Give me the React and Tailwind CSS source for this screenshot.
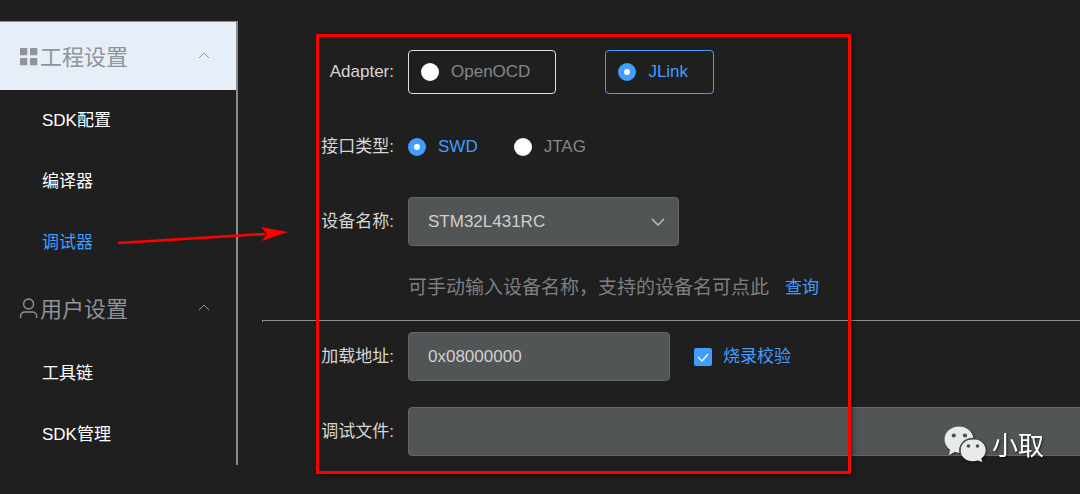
import { useState } from 'react';

const menus = [
    { title: '工程设置', icon: 'grid', active: true, items: ['SDK配置', '编译器', '调试器'] },
    { title: '用户设置', icon: 'user', active: false, items: ['工具链', 'SDK管理'] },
];

const MenuIcon = ({ name }) => {
    if (name === 'grid') {
        return (
            <svg viewBox="0 0 20 20" className="w-5 h-5 shrink-0" fill="currentColor" aria-hidden="true">
                <rect x="1" y="2" width="7.3" height="7.3" rx="0.6" />
                <rect x="11" y="2" width="7.3" height="7.3" rx="0.6" />
                <rect x="1" y="12" width="7.3" height="7.3" rx="0.6" />
                <rect x="11" y="12" width="7.3" height="7.3" rx="0.6" />
            </svg>
        );
    }
    return (
        <svg viewBox="0 0 20 20" className="w-5 h-5 shrink-0" fill="none" stroke="currentColor" strokeWidth="1.4" aria-hidden="true">
            <circle cx="9.6" cy="6" r="5" />
            <path d="M1.6 20v-2a4 4 0 0 1 4-4h8a4 4 0 0 1 4 4v2" />
        </svg>
    );
};

const Sidebar = ({ current, onSelect }) => (
    <nav className="w-[238px] shrink-0 border-t border-r-2 border-t-[#8a8a8a] border-r-[#8a8a8a]">
        {menus.map((menu) => (
            <section key={menu.title}>
                <button
                    type="button"
                    className={`flex w-full items-center pl-[19px] pr-[25px] text-[22px] text-[#909399] ${menu.active ? 'h-[68px] bg-[#e6eef8]' : 'h-[70px]'}`}
                >
                    <MenuIcon name={menu.icon} />
                    <span className="ml-px pt-0.5">{menu.title}</span>
                    <svg viewBox="0 0 14 14" className="ml-auto w-3.5 h-3.5" fill="none" stroke="currentColor" strokeWidth="1" aria-hidden="true">
                        <path d="M2 9l5-5 5 5" />
                    </svg>
                </button>
                <ul>
                    {menu.items.map((item) => (
                        <li key={item}>
                            <button
                                type="button"
                                onClick={() => onSelect(item)}
                                className={`flex h-[61px] w-full items-center pl-[42px] text-[17px] ${current === item ? 'text-[#409eff]' : 'text-white'}`}
                            >
                                {item}
                            </button>
                        </li>
                    ))}
                </ul>
            </section>
        ))}
    </nav>
);

const Radio = ({ name, value, current, onChange, bordered }) => {
    const checked = value === current;
    const frame = bordered ? 'h-11 rounded border px-3 pr-[25px]' : 'h-11';
    const tone = checked ? 'border-[#409eff] text-[#409eff]' : 'border-[#dcdfe6] text-[#85878c]';
    return (
        <label className={`flex items-center gap-3 text-[17px] ${frame} ${tone}`}>
            <input
                type="radio"
                name={name}
                value={value}
                checked={checked}
                onChange={() => onChange(value)}
                className="w-[18px] h-[18px] shrink-0 appearance-none rounded-full bg-white checked:border-[6px] checked:border-[#409eff]"
            />
            {value}
        </label>
    );
};

const Row = ({ label, htmlFor, children }) => (
    <div className="flex items-center gap-3.5">
        <label htmlFor={htmlFor} className="w-[132px] shrink-0 text-right text-[17px] text-[#d8d6d4]">
            {label}
        </label>
        {children}
    </div>
);

const fieldStyle = 'h-[49px] rounded border border-[#646767] bg-[#515556] px-[19px] text-[17px] text-[#d3cfcd]';

const App = () => {
    const [current, setCurrent] = useState('调试器');
    const [adapter, setAdapter] = useState('JLink');
    const [port, setPort] = useState('SWD');
    const [address, setAddress] = useState('0x08000000');
    const [file, setFile] = useState('');
    const [verify, setVerify] = useState(true);

    return (
        <div className="relative flex min-h-screen items-start overflow-hidden bg-[#1f1f1f] pt-[21px] pb-7 font-['Liberation_Sans','Noto_Sans_CJK_SC',sans-serif]">
            <Sidebar current={current} onSelect={setCurrent} />

            <form className="min-w-0 flex-1 pt-[29px] pl-6" onSubmit={(e) => e.preventDefault()}>
                <Row label="Adapter:">
                    <div className="flex gap-[49px]">
                        <Radio name="adapter" value="OpenOCD" current={adapter} onChange={setAdapter} bordered />
                        <Radio name="adapter" value="JLink" current={adapter} onChange={setAdapter} bordered />
                    </div>
                </Row>

                <div className="mt-[31px]">
                    <Row label="接口类型:">
                        <div className="flex gap-9">
                            <Radio name="port" value="SWD" current={port} onChange={setPort} />
                            <Radio name="port" value="JTAG" current={port} onChange={setPort} />
                        </div>
                    </Row>
                </div>

                <div className="mt-7">
                    <Row label="设备名称:" htmlFor="device">
                        <div className="relative w-[271px]">
                            <select id="device" className={`w-full appearance-none ${fieldStyle}`}>
                                <option>STM32L431RC</option>
                            </select>
                            <svg viewBox="0 0 14 14" className="pointer-events-none absolute top-[18px] right-3.5 w-3.5 h-3.5 text-[#c0c4cc]" fill="none" stroke="currentColor" strokeWidth="1.4" aria-hidden="true">
                                <path d="M1 4l6 6 6-6" />
                            </svg>
                        </div>
                    </Row>
                </div>

                <p className="mt-7 ml-[146px] flex items-center gap-4 text-[19px] leading-7 text-[#7d7f84]">
                    可手动输入设备名称，支持的设备名可点此
                    <a href="#query" className="text-[17px] text-[#409eff]">查询</a>
                </p>

                <hr className="mt-[18px] mb-2.5 h-0.5 border-t border-l border-[#8f8f8f]" />

                <Row label="加载地址:" htmlFor="address">
                    <input
                        id="address"
                        type="text"
                        value={address}
                        onChange={(e) => setAddress(e.target.value)}
                        className={`w-[262px] ${fieldStyle}`}
                    />
                    <label className="ml-2.5 flex items-center gap-[11px] text-[17px] text-[#409eff]">
                        <span className="relative flex">
                            <input
                                type="checkbox"
                                checked={verify}
                                onChange={(e) => setVerify(e.target.checked)}
                                className="w-[18px] h-[18px] appearance-none rounded-xs bg-white checked:bg-[#409eff]"
                            />
                            <svg viewBox="0 0 18 18" className="pointer-events-none absolute inset-0" fill="none" stroke="white" strokeWidth="1.2" aria-hidden="true">
                                <path d="M4 9l4 4 6-7" />
                            </svg>
                        </span>
                        烧录校验
                    </label>
                </Row>

                <div className="mt-[26px]">
                    <Row label="调试文件:" htmlFor="file">
                        <input
                            id="file"
                            type="text"
                            value={file}
                            onChange={(e) => setFile(e.target.value)}
                            className={`-mr-2 min-w-0 flex-1 ${fieldStyle}`}
                        />
                    </Row>
                </div>
            </form>

            {/* Marco y flecha de la anotación */}
            <div className="pointer-events-none absolute top-[34px] left-[316px] h-[440px] w-[535px] border-3 border-[#ff0000] shadow-[2px_2px_5px_rgba(0,0,0,0.4)]" />
            <svg viewBox="0 0 172 20" className="pointer-events-none absolute top-[224px] left-[117px] w-[172px] h-5" aria-hidden="true">
                <path d="M1 19 148 10" stroke="#ff0000" strokeWidth="2.6" />
                <path d="M171 8 144 3l6 7-5 7Z" fill="#ff0000" />
            </svg>

            {/* Marca de agua */}
            <div className="pointer-events-none absolute right-9 bottom-7 flex items-start gap-1.5 text-[26px] leading-10 text-white drop-shadow-[1px_1px_1px_rgba(0,0,0,0.6)]">
                <svg viewBox="0 0 42 36" className="w-[42px] h-9" aria-hidden="true">
                    <path fill="#e8eae9" d="M15 .5C7 .5.5 6 .5 13.5c0 4.3 2.2 7.8 5.6 10.3L5 29l5.8-3c1.5.5 3 .8 5 .8A13 11.5 0 0 1 29.5 12.3C28.5 5.3 22.5.5 15 .5Z" />
                    <path fill="#e8eae9" d="M29 13.2c-7.2 0-12.5 4.8-12.5 11s5.3 11 12.5 11c1.7 0 3.2-.2 4.6-.7l4.8 1.5-1.2-3.5c2.8-2 4.5-4.9 4.5-8.3 0-6.2-5.5-11-12.7-11Z" />
                    <path fill="none" stroke="#4c5050" strokeWidth="1.2" d="M15.8 26.5c-.5-8.3 5.2-14.5 14.2-14" />
                    <g fill="#4c5050">
                        <circle cx="9.8" cy="9.5" r="2.1" />
                        <circle cx="21" cy="9.5" r="2.1" />
                        <circle cx="24.5" cy="20" r="1.8" />
                        <circle cx="33.5" cy="20" r="1.8" />
                    </g>
                </svg>
                <span>小取</span>
            </div>
        </div>
    );
};

export default App;
